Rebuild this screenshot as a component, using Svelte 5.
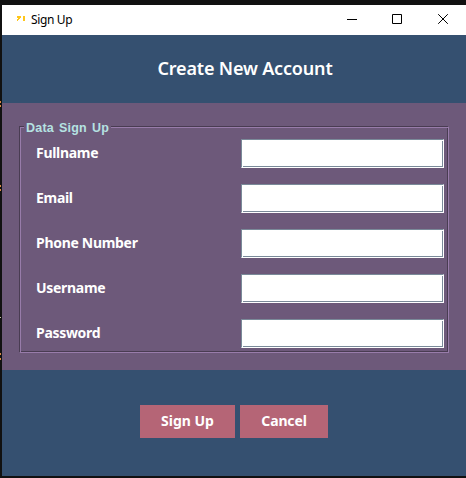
<script>
  const fields = [
    { label: 'Fullname', type: 'text' },
    { label: 'Email', type: 'text' },
    { label: 'Phone Number', type: 'text' },
    { label: 'Username', type: 'text' },
    { label: 'Password', type: 'text' }
  ];
</script>

<div class="desktop">
  <div class="edge">
    <i style="top: 101px"></i>
    <i style="top: 105px"></i>
    <i style="top: 185px"></i>
    <i style="top: 189px"></i>
    <i class="pale" style="top: 317px"></i>
    <i style="top: 353px"></i>
    <i style="top: 358px"></i>
  </div>
  <main class="window">
    <div class="titlebar">
      <svg class="logo" width="10" height="6" viewBox="0 0 10 6" shape-rendering="crispEdges">
        <path d="M0 0h4v2h-1v1h-1v1h-1v1h-1v-2h1v-1h-1zM6 0h2v5h-2z" fill="#ffc61a" />
      </svg>
      <span class="caption">Sign Up</span>
      <div class="controls">
        <svg width="11" height="11" viewBox="0 0 11 11"><path d="M0 5.5h10" /></svg>
        <svg width="11" height="11" viewBox="0 0 11 11"><path d="M.5 .5h9v9h-9z" /></svg>
        <svg width="12" height="11" viewBox="0 0 12 11"><path d="M1.2 .2l9.6 9.6M10.8 .2l-9.6 9.6" /></svg>
      </div>
    </div>
    <header><h1>Create New Account</h1></header>
    <section>
      <div class="group">
        <div class="legend">Data Sign Up</div>
        {#each fields as field}
          <label class="row">
            <span>{field.label}</span>
            <span class="entry"><input type={field.type} /></span>
          </label>
        {/each}
      </div>
    </section>
    <footer>
      <button class="submit">Sign Up</button>
      <button class="cancel">Cancel</button>
    </footer>
  </main>
</div>

<style>
  :global(body) { margin: 0; background: #111; }
  .desktop {
    position: relative;
    box-sizing: border-box;
    width: 466px;
    height: 478px;
    padding: 5px 0 2px 2px;
    background: #111;
    overflow: hidden;
    font-family: 'Noto Sans', 'Open Sans', sans-serif;
  }
  .edge i { position: absolute; left: 0; width: 1px; height: 2px; background: #d98a45; }
  .edge .pale { background: #c9c9a8; height: 1px; }
  .window { display: flex; flex-direction: column; height: 471px; }
  .titlebar {
    display: flex;
    align-items: center;
    height: 30px;
    background: #fff;
    padding-left: 15px;
    box-sizing: border-box;
  }
  .logo { margin-top: -3px; }
  .caption { margin-left: 4px; font-size: 12px; line-height: 16px; color: #000; letter-spacing: -0.35px; white-space: nowrap; }
  .controls { display: flex; gap: 34px; margin-left: auto; margin-right: 17px; margin-top: -1px; }
  .controls svg { fill: none; stroke: #000; stroke-width: 1; }
  header { height: 68px; background: #355070; display: flex; justify-content: center; align-items: center; padding: 0 0 2px 22px; box-sizing: border-box; }
  h1 { margin: 0; color: #fff; font-size: 18px; font-weight: 600; line-height: 24px; letter-spacing: -0.17px; white-space: nowrap; }
  section { height: 267px; box-sizing: border-box; padding: 23px 17px 17px; background: #6d597a; }
  .group {
    position: relative;
    box-sizing: border-box;
    height: 227px;
    width: 430px;
    padding: 12px 4px 0 16px;
    border: 1px solid #493c52;
    border-right-color: #987caa;
    border-bottom-color: #987caa;
    box-shadow: inset 1px 1px #987caa, inset -1px -1px #493c52;
  }
  .legend {
    position: absolute;
    left: 4px;
    top: -7px;
    width: 87px;
    padding-left: 2px;
    box-sizing: border-box;
    background: #6d597a;
    color: #b5e2e2;
    font: bold 12.5px/16px 'Liberation Sans', Arial, sans-serif;
    letter-spacing: 0.2px;
    word-spacing: 1.5px;
    white-space: nowrap;
  }
  .row {
    display: flex;
    justify-content: space-between;
    height: 29px;
    margin-bottom: 16px;
    color: #fff;
    font-size: 14px;
    line-height: 28px;
    font-weight: 700;
    letter-spacing: -0.3px;
  }
  .entry {
    box-sizing: border-box;
    width: 203px;
    height: 29px;
    border: 1px solid #fff;
    border-top-color: #7a8a99;
    border-left-color: #7a8a99;
    background: #fff;
    padding: 1px 0 0 1px;
    display: flex;
  }
  input {
    box-sizing: border-box;
    width: 100%;
    height: 100%;
    padding: 0 4px;
    border: solid #7a8a99;
    border-width: 0 1px 1px 0;
    outline: 0;
    background: #fff;
  }
  footer { height: 106px; box-sizing: border-box; padding: 35px 0 0 138px; display: flex; align-items: flex-start; gap: 5px; background: #355070; }
  button {
    height: 33px;
    padding: 0 0 2px;
    border: 0;
    background: #b56576;
    color: #fff;
    font: 700 14px/31px 'Noto Sans', 'Open Sans', sans-serif;
    letter-spacing: -0.15px;
  }
  .submit { width: 95px; letter-spacing: 0; }
  .cancel { width: 88px; }
</style>
